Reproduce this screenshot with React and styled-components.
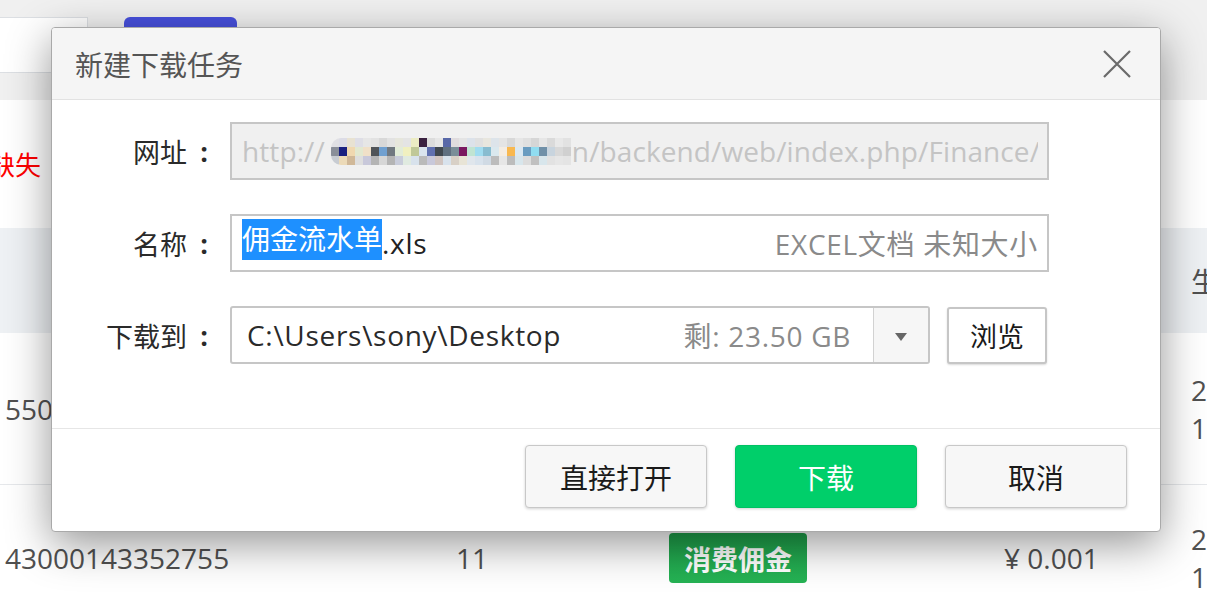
import React from "react";
import styled, { createGlobalStyle } from "styled-components";

const GlobalStyle = createGlobalStyle`
  html, body {
    margin: 0;
    padding: 0;
    background: #fff;
  }
  body {
    font-family: "Open Sans", "Noto Sans CJK SC", sans-serif;
  }
  * {
    box-sizing: border-box;
  }
`;

const Page = styled.div`
  position: relative;
  width: 1207px;
  height: 616px;
  overflow: hidden;
  background: #fff;
`;

/* page behind the dialog */

const TopBar = styled.div`
  height: 100px;
  background: #f0f0f0;
  display: flex;
  align-items: flex-start;
  padding-top: 17px;
`;

const SearchBox = styled.div`
  width: 88px;
  height: 56px;
  background: #fff;
  border: 1px solid #dcdfe3;
  border-left: none;
`;

const TabButton = styled.div`
  margin-left: 36px;
  width: 113px;
  height: 44px;
  background: #4750dd;
  border-radius: 6px;
`;

const FilterRow = styled.div`
  height: 128px;
  display: flex;
  align-items: center;
`;

const MissingText = styled.span`
  margin-left: -11px;
  color: #ff0000;
  font-size: 26px;
`;

const Row = styled.div`
  display: grid;
  grid-template-columns: 451px 213px 335px 187px 1fr;
  align-items: center;
  height: ${(p) => p.$h}px;
  padding-left: 5px;
  background: ${(p) => (p.$head ? "#eef1f4" : "#fff")};
  border-bottom: ${(p) => (p.$line ? "1px solid #e6e8eb" : "none")};
  font-size: 28px;
  color: #505050;
  white-space: nowrap;
`;

const Stack = styled.div`
  display: flex;
  flex-direction: column;
  line-height: 38px;
`;

const Badge = styled.span`
  justify-self: start;
  display: inline-flex;
  align-items: center;
  height: 50px;
  padding: 0 15px;
  border-radius: 4px;
  background: linear-gradient(#1f9f4a, #25b354);
  color: #fff;
  font-weight: 700;
  font-size: 27px;
`;

/* dialog */

const Dialog = styled.div`
  position: absolute;
  left: 51px;
  top: 27px;
  width: 1110px;
  height: 505px;
  display: flex;
  flex-direction: column;
  background: #fff;
  border: 1px solid #a9a9a9;
  border-radius: 4px;
  box-shadow: 0 12px 44px rgba(0, 0, 0, 0.42);
  overflow: hidden;
`;

const Header = styled.div`
  height: 72px;
  flex-shrink: 0;
  display: flex;
  align-items: center;
  justify-content: space-between;
  padding: 0 28px 0 23px;
  background: #f5f5f5;
  border-bottom: 1px solid #e2e2e2;
`;

const Title = styled.div`
  font-size: 28px;
  color: #555;
`;

const CloseButton = styled.div`
  width: 30px;
  height: 30px;
  display: flex;
`;

const Body = styled.div`
  height: 329px;
  flex-shrink: 0;
  display: flex;
  flex-direction: column;
  gap: 34px;
  padding-top: 22px;
  border-bottom: 1px solid #e6e6e6;
`;

const FieldRow = styled.div`
  display: flex;
  align-items: center;
  height: 58px;
`;

const Label = styled.div`
  width: 164px;
  display: flex;
  justify-content: flex-end;
  align-items: center;
  font-size: 27px;
  color: #2a2a2a;
  margin-right: 14px;
`;

const Colon = styled.span`
  width: 24px;
  margin-left: 5px;
  text-align: center;
  font-weight: 700;
`;

const Input = styled.div`
  width: 819px;
  height: 58px;
  display: flex;
  align-items: center;
  padding: 0 9px 0 10px;
  border: 2px solid #c6c6c6;
  background: ${(p) => (p.$disabled ? "#f0f0f0" : "#fff")};
  font-size: 28px;
  letter-spacing: ${(p) => (p.$disabled ? 0.1 : 0.7)}px;
  color: ${(p) => (p.$disabled ? "#c4c4c4" : "#222")};
  white-space: nowrap;
`;

const Clip = styled.div`
  flex: 1;
  display: flex;
  align-items: center;
  overflow: hidden;
`;

const Mosaic = styled.span`
  display: inline-grid;
  grid-template-columns: repeat(30, 8px);
  grid-auto-rows: 9px;
  margin: 0 1px 0 6px;
  border-radius: 10px 0 0 10px;
  overflow: hidden;
  flex-shrink: 0;
`;

const Cell = styled.span`
  background: ${(p) => p.$c};
`;

const Selected = styled.span`
  display: inline-block;
  line-height: 41px;
  margin-top: -8px;
  letter-spacing: 0;
  background: #1e90ff;
  color: #fff;
`;

const NameText = styled.span`
  flex: 1;
  display: flex;
  align-items: center;
`;

const Meta = styled.span`
  color: #8a8a8a;
  margin-right: ${(p) => p.$mr || 0}px;
`;

const PathBox = styled.div`
  width: 700px;
  height: 58px;
  display: flex;
  align-items: center;
  border: 2px solid #c6c6c6;
  border-radius: 3px;
  font-size: 28px;
  letter-spacing: 0.7px;
  color: #2a2a2a;
  overflow: hidden;
`;

const PathText = styled.span`
  flex: 1;
  padding-left: 15px;
`;

const DropButton = styled.div`
  width: 55px;
  height: 100%;
  display: flex;
  align-items: center;
  justify-content: center;
  background: #f6f6f6;
  border-left: 1px solid #d2d2d2;
`;

const Arrow = styled.span`
  width: 0;
  height: 0;
  border-left: 6px solid transparent;
  border-right: 6px solid transparent;
  border-top: 8px solid #666;
  margin-top: 3px;
`;

const BrowseButton = styled.div`
  margin-left: 17px;
  width: 100px;
  height: 57px;
  display: flex;
  align-items: center;
  justify-content: center;
  border: 2px solid #c6c6c6;
  border-radius: 3px;
  background: #fff;
  box-shadow: 0 1px 2px rgba(0, 0, 0, 0.15);
  font-size: 27px;
  color: #1a1a1a;
`;

const Footer = styled.div`
  flex: 1;
  display: flex;
  justify-content: flex-end;
  align-items: flex-start;
  gap: 28px;
  padding: 16px 33px 0 0;
`;

const Button = styled.div`
  width: 182px;
  height: 63px;
  display: flex;
  align-items: center;
  justify-content: center;
  border-radius: 4px;
  border: 1px solid ${(p) => (p.$primary ? "#00c163" : "#c8c8c8")};
  background: ${(p) => (p.$primary ? "#00cf6a" : "#f7f7f7")};
  color: ${(p) => (p.$primary ? "#fff" : "#1a1a1a")};
  box-shadow: 0 1px 3px rgba(0, 0, 0, 0.18);
  font-size: 28px;
`;

const mosaicRows = [
  ["#e0e0e4", "#dcdce6", "#e8e2d2", "#dedee6", "#e6e6e6", "#e2e2e2", "#d8d8d8", "#e2e2e2", "#e6e6dc", "#e4e4e4",
   "#ececc4", "#3a2040", "#dcdcdc", "#e6e6e6", "#5868a8", "#e0dcde", "#e4e4e4", "#dce2ea", "#e0e0e0", "#e8e6de",
   "#dde4ea", "#e4e4e4", "#d8d8d8", "#e6e6e6", "#e0e0e0", "#d6d6d6", "#e6e6e6", "#dadada", "#e8e8e8", "#e2e2e2"],
  ["#8a8f99", "#1a2080", "#f0d8b0", "#e2e8d0", "#f0e0c8", "#505458", "#70a0d0", "#707880", "#e2ecd8", "#f0f0c0",
   "#c0c898", "#dae4ee", "#6070b0", "#404850", "#607080", "#7a8e98", "#7a1860", "#c0e4d2", "#a0dcf0", "#88bcd0",
   "#dae8ee", "#f4ece2", "#f8b850", "#dae8f2", "#6a9cc0", "#90dcf0", "#7090a8", "#c8d4de", "#d8d8d8", "#d0d0d0"],
  ["#c8ccd2", "#ecdab8", "#d0b898", "#dedede", "#c8c8da", "#b4b4b4", "#d6d6d6", "#b4b4b4", "#c8ccda", "#e0eae0",
   "#d8e2ec", "#bababa", "#c8c8da", "#d0c4c0", "#d8e2ec", "#d8d0c6", "#e8e4d6", "#e0e6ec", "#d8e2ec", "#d0dae4",
   "#bcbcbc", "#e6e6e6", "#bcbcbc", "#d8e6ec", "#dcdcdc", "#c0c0c0", "#d8e6ec", "#e2e2e2", "#e6e6e6", "#e4e4e4"],
];

const CloseIcon = () => (
  <svg width="30" height="30" viewBox="0 0 30 30">
    <path d="M2 2 L28 28 M28 2 L2 28" stroke="#6a6a6a" strokeWidth="2.2" fill="none" />
  </svg>
);

const FieldLabel = ({ children }) => (
  <Label>
    <span>{children}</span>
    <Colon>:</Colon>
  </Label>
);

export default function App() {
  return (
    <>
      <GlobalStyle />
      <Page>
        <TopBar>
          <SearchBox />
          <TabButton />
        </TopBar>
        <FilterRow>
          <MissingText>缺失</MissingText>
        </FilterRow>
        <Row $h={105} $head>
          <span />
          <span />
          <span />
          <span />
          <span>生</span>
        </Row>
        <Row $h={152} $line>
          <span>550</span>
          <span />
          <span />
          <span />
          <Stack>
            <span>20</span>
            <span>1</span>
          </Stack>
        </Row>
        <Row $h={146}>
          <span>43000143352755</span>
          <span>11</span>
          <Badge>消费佣金</Badge>
          <span>¥ 0.001</span>
          <Stack>
            <span>20</span>
            <span>14</span>
          </Stack>
        </Row>

        <Dialog>
          <Header>
            <Title>新建下载任务</Title>
            <CloseButton>
              <CloseIcon />
            </CloseButton>
          </Header>
          <Body>
            <FieldRow>
              <FieldLabel>网址</FieldLabel>
              <Input $disabled>
                <Clip>
                  <span>http://</span>
                  <Mosaic>
                    {mosaicRows.flat().map((c, i) => (
                      <Cell key={i} $c={c} />
                    ))}
                  </Mosaic>
                  <span>n/backend/web/index.php/Finance/commission</span>
                </Clip>
              </Input>
            </FieldRow>
            <FieldRow>
              <FieldLabel>名称</FieldLabel>
              <Input>
                <NameText>
                  <Selected>佣金流水单</Selected>
                  <span>.xls</span>
                </NameText>
                <Meta>EXCEL文档 未知大小</Meta>
              </Input>
            </FieldRow>
            <FieldRow>
              <FieldLabel>下载到</FieldLabel>
              <PathBox>
                <PathText>C:\Users\sony\Desktop</PathText>
                <Meta $mr={22}>剩: 23.50 GB</Meta>
                <DropButton>
                  <Arrow />
                </DropButton>
              </PathBox>
              <BrowseButton>浏览</BrowseButton>
            </FieldRow>
          </Body>
          <Footer>
            <Button>直接打开</Button>
            <Button $primary>下载</Button>
            <Button>取消</Button>
          </Footer>
        </Dialog>
      </Page>
    </>
  );
}
